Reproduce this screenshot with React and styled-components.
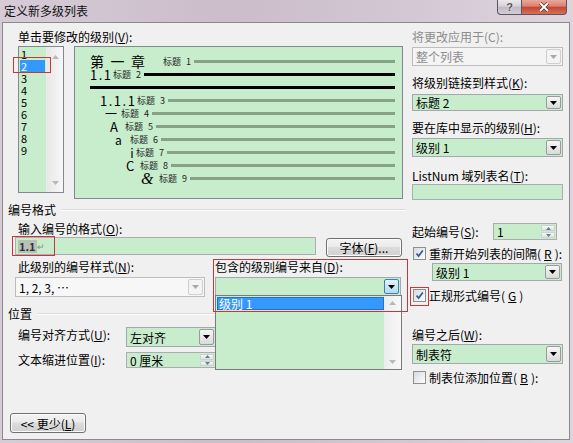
import React from 'react'
import styled, { createGlobalStyle } from 'styled-components'

const GREEN = '#c7edcc'
const RED = '#c8363a'

const px = v => (typeof v === 'number' ? `${v}px` : v || '0')

const GlobalStyle = createGlobalStyle`
  html, body { margin: 0; padding: 0; background: #d4c8d4; }
  body {
    font-family: "Noto Sans CJK SC", "Liberation Sans", sans-serif;
    font-size: 12px;
    color: #000;
  }
  #root { width: 573px; height: 443px; }
  u { text-decoration: underline; text-underline-offset: 1px; }
`

const Window = styled.div`
  width: 573px;
  height: 443px;
  display: flex;
  flex-direction: column;
  background: linear-gradient(90deg, #d6cbd6 0%, #cbbdca 40%, #d3c7d3 70%, #ddd4dd 100%);
  overflow: hidden;
`
const TitleBar = styled.div`
  height: 22px;
  flex: none;
  display: flex;
  justify-content: space-between;
  align-items: flex-start;
  padding: 0 6px 0 4px;
`
const Title = styled.div`
  line-height: 22px;
  color: #111;
`
const Caption = styled.div`
  display: flex;
`
const CaptionButton = styled.div`
  width: ${p => p.$w}px;
  height: 15px;
  box-sizing: border-box;
  display: flex;
  align-items: center;
  justify-content: center;
  border: 1px solid #5e5460;
  border-top: none;
  border-left-width: ${p => (p.$close ? 0 : 1)}px;
  border-radius: ${p => (p.$close ? '0 0 4px 0' : '0 0 0 4px')};
  background: ${p =>
    p.$close
      ? 'linear-gradient(#e9a99c 0%, #d9806f 45%, #c5452f 50%, #d4715a 100%)'
      : 'linear-gradient(#ece8ec 0%, #d7d1d8 45%, #c1bac3 50%, #d2ccd4 100%)'};
  font: bold 11px "Liberation Sans", sans-serif;
  color: #555;
  text-shadow: 0 0 2px #fff;
`
const Client = styled.div`
  flex: 1;
  margin: 0 3px 3px 2px;
  border: 1px solid #8a8a8a;
  background: #f0f0f0;
  display: flex;
  flex-direction: column;
  position: relative;
`

/* ---------- generic controls ---------- */

const Label = styled.div`
  height: 14px;
  line-height: 14px;
  white-space: nowrap;
  color: ${p => (p.$disabled ? '#8d8d8d' : '#000')};
  margin-top: ${p => p.$mt || 0}px;
  padding-left: ${p => p.$pl || 0}px;
  width: ${p => (p.$w ? `${p.$w}px` : 'auto')};
  flex: none;
`
const Combo = styled.div`
  position: relative;
  display: flex;
  box-sizing: border-box;
  flex: none;
  height: ${p => p.$h}px;
  width: ${p => (p.$w ? `${p.$w}px` : 'auto')};
  margin-top: ${p => px(p.$mt)};
  margin-left: ${p => px(p.$ml)};
  border: 1px solid ${p => (p.$disabled ? '#bdbdbd' : '#a4a8ae')};
  background: ${p => p.$bg || GREEN};
`
const ComboText = styled.div`
  flex: 1;
  display: flex;
  align-items: center;
  padding-left: 3px;
  white-space: nowrap;
  color: ${p => (p.$grey ? '#8d8d8d' : '#000')};
`
const ArrowBtn = styled.div`
  width: 15px;
  margin: 1px;
  box-sizing: border-box;
  display: flex;
  align-items: center;
  justify-content: center;
  border: 1px solid ${p => (p.$open ? '#3c7fb1' : p.$disabled ? '#cfcfcf' : '#9a9a9a')};
  border-radius: 2px;
  background: ${p =>
    p.$open
      ? 'linear-gradient(#e3f3fc, #b4daf2)'
      : p.$disabled
      ? '#f4f4f4'
      : 'linear-gradient(#f6f6f6, #dadada)'};
`
const Arrow = ({ color = '#000', up }) => (
  <svg width="7" height="4" viewBox="0 0 7 4">
    <polygon points={up ? '0,4 7,4 3.5,0' : '0,0 7,0 3.5,4'} fill={color} />
  </svg>
)

const ComboBox = ({ text, h, w, mt, ml, bg, disabled, grey, open, children }) => (
  <Combo $h={h} $w={w} $mt={mt} $ml={ml} $bg={bg} $disabled={disabled}>
    <ComboText $grey={grey}>{text}</ComboText>
    <ArrowBtn $disabled={disabled} $open={open}>
      <Arrow color={disabled ? '#a8a8a8' : '#000'} />
    </ArrowBtn>
    {children}
  </Combo>
)

const TextInput = styled.div`
  position: relative;
  box-sizing: border-box;
  flex: none;
  height: ${p => p.$h}px;
  width: ${p => (p.$w ? `${p.$w}px` : 'auto')};
  margin-top: ${p => p.$mt || 0}px;
  border: 1px solid #abadb3;
  background: ${GREEN};
  display: flex;
  align-items: center;
  padding-left: 2px;
`
const Highlight = styled.span`
  background: #b7c1b7;
  color: #333;
  font-weight: bold;
  font-size: 11px;
  line-height: 13px;
  padding: 0 1px;
`
const ReturnMark = styled.span`
  color: #8a8a8a;
  font-size: 9px;
`

const Spinner = styled.div`
  box-sizing: border-box;
  display: flex;
  flex: none;
  width: ${p => p.$w}px;
  height: ${p => p.$h}px;
  margin-left: ${p => px(p.$ml)};
  margin-right: ${p => px(p.$mr)};
  border: 1px solid #abadb3;
  background: ${GREEN};
`
const SpinButtons = styled.div`
  width: 14px;
  display: flex;
  flex-direction: column;
  margin: 1px;
  gap: 1px;
`
const SpinButton = styled.div`
  flex: 1;
  display: flex;
  align-items: center;
  justify-content: center;
  border: 1px solid #cdd0d4;
  border-radius: 1px;
  background: linear-gradient(#f8f8f8, #e2e2e2);
  svg { width: 5px; height: 3px; }
`
const SpinBox = ({ text, w, h, ml, mr }) => (
  <Spinner $w={w} $h={h} $ml={ml} $mr={mr}>
    <ComboText>{text}</ComboText>
    <SpinButtons>
      <SpinButton><Arrow up color="#6b7b8b" /></SpinButton>
      <SpinButton><Arrow color="#6b7b8b" /></SpinButton>
    </SpinButtons>
  </Spinner>
)

const WinButton = styled.div`
  box-sizing: border-box;
  flex: none;
  width: ${p => p.$w}px;
  height: ${p => p.$h}px;
  margin: ${p => p.$m || 0};
  border: 1px solid #707070;
  border-radius: 3px;
  background: linear-gradient(#f3f3f3 0%, #ebebeb 45%, #dcdcdc 50%, #d0d0d0 100%);
  box-shadow: inset 0 0 0 1px #fbfbfb;
  display: flex;
  align-items: center;
  justify-content: center;
  white-space: nowrap;
`

const CheckRow = styled.div`
  display: flex;
  align-items: center;
  gap: 3px;
  height: 14px;
  margin-top: ${p => p.$mt || 0}px;
  padding-left: 3px;
  white-space: nowrap;
`
const Box = styled.div`
  position: relative;
  width: 13px;
  height: 13px;
  box-sizing: border-box;
  border: 1px solid #8e8f8f;
  background: linear-gradient(135deg, #d6dbe0, #fdfdfd);
  display: flex;
  align-items: center;
  justify-content: center;
`
const RedMark = styled.div`
  position: absolute;
  z-index: 5;
  pointer-events: none;
  border: 1px solid ${RED};
  left: ${p => p.$l}px;
  top: ${p => p.$t}px;
  width: ${p => p.$w};
  height: ${p => p.$h}px;
  box-sizing: border-box;
`
const CheckBox = ({ checked, marked }) => (
  <Box>
    {checked && (
      <svg width="9" height="9" viewBox="0 0 9 9">
        <path d="M1.5 4.5 L3.6 7 L7.8 1.5" fill="none" stroke="#3c5a96" strokeWidth="1.8" />
      </svg>
    )}
    {marked && <RedMark $l={-4} $t={-3} $w="19px" $h={19} />}
  </Box>
)

const Section = styled.div`
  display: flex;
  align-items: center;
  gap: 6px;
  height: 14px;
  line-height: 14px;
  margin-top: ${p => p.$mt || 0}px;
  &::after {
    content: '';
    flex: 1;
    border-top: 1px solid #dadada;
    border-bottom: 1px solid #fff;
  }
`

/* ---------- top area ---------- */

const Top = styled.div`
  display: flex;
  padding: 7px 0 0 15px;
`
const Column = styled.div`
  display: flex;
  flex-direction: column;
  flex: none;
  width: ${p => p.$w}px;
  margin-left: ${p => p.$ml || 0}px;
  margin-top: ${p => p.$mt || 0}px;
  padding-left: ${p => p.$pl || 0}px;
`
const Row = styled.div`
  display: flex;
  align-items: ${p => p.$align || 'flex-start'};
  margin-top: ${p => p.$mt || 0}px;
  gap: ${p => p.$gap || 0}px;
`
const LevelList = styled.div`
  position: relative;
  box-sizing: border-box;
  width: 46px;
  height: 147px;
  border: 1px solid #828790;
  display: flex;
`
const LevelItems = styled.div`
  width: 27px;
  background: ${GREEN};
  padding-top: 1px;
`
const LevelItem = styled.div`
  position: relative;
  height: 12px;
  line-height: 12px;
  font-size: 11px;
  width: 24px;
  margin-left: 1px;
  padding-left: 1px;
  background: ${p => (p.$selected ? '#3399ff' : 'transparent')};
  color: ${p => (p.$selected ? '#fff' : '#000')};
`
const ScrollTrack = styled.div`
  flex: 1;
  display: flex;
  flex-direction: column;
  justify-content: space-between;
  align-items: center;
  padding: 8px 0 7px;
  background: linear-gradient(90deg, #e8e8e8, #f7f7f7);
  border-left: 1px solid #ededed;
`

const Preview = styled.div`
  box-sizing: border-box;
  width: 329px;
  height: 153px;
  border: 1px solid #828790;
  background: ${GREEN};
  padding: 8px 7px 0 0;
  display: flex;
  flex-direction: column;
`
const PRow = styled.div`
  height: 13px;
  display: flex;
  align-items: center;
  padding-left: ${p => p.$indent}px;
`
const PNum = styled.span`
  flex: none;
  width: ${p => p.$w}px;
  font-size: ${p => p.$size}px;
  letter-spacing: ${p => p.$ls || 0}px;
  line-height: 13px;
  white-space: nowrap;
  font-family: ${p => (p.$serif ? '"Liberation Serif", serif' : 'inherit')};
  font-style: ${p => (p.$serif ? 'italic' : 'normal')};
`
const PCap = styled.span`
  flex: none;
  width: 28px;
  display: flex;
  justify-content: space-between;
  font-size: 9px;
  line-height: 13px;
  color: #222;
`
const PBar = styled.div`
  flex: 1;
  height: 3px;
  margin-left: ${p => p.$gap}px;
  background: ${p => (p.$black ? '#000' : '#88a288')};
`

const LEVELS = [
  { num: '第一章', w: 73, size: 14, ls: 6.5, indent: 15, cap: 1 },
  { num: '1.1', w: 23, size: 13, ls: 1.5, indent: 15, cap: 2, black: true },
  { indent: 15, black: true },
  { num: '1.1.1', w: 37, size: 13, ls: 1.5, indent: 25, cap: 3 },
  { num: '一', w: 16, size: 12, indent: 30, cap: 4 },
  { num: 'A', w: 15, size: 13, indent: 35, cap: 5 },
  { num: 'a', w: 15, size: 12, indent: 40, cap: 6 },
  { num: 'ⅰ', w: 10, size: 12, indent: 51, cap: 7 },
  { num: 'C', w: 14, size: 13, indent: 51, cap: 8 },
  { num: '&', w: 18, size: 16, indent: 66, cap: 9, serif: true },
]

/* ---------- lower area ---------- */

const Lower = styled.div`
  display: flex;
  margin-top: 3px;
  padding-left: 5px;
`
const Field = styled.div`
  position: relative;
  flex: none;
  width: ${p => p.$w}px;
  margin-left: ${p => p.$ml || 0}px;
  padding: ${p => p.$pad || 0};
  display: flex;
  flex-direction: column;
`
const DropList = styled.div`
  position: absolute;
  z-index: 4;
  top: 100%;
  left: -1px;
  width: 187px;
  height: 75px;
  box-sizing: border-box;
  border: 1px solid #7a7a7a;
  background: ${GREEN};
  display: flex;
`
const DropItems = styled.div`
  flex: 1;
`
const DropItem = styled.div`
  height: 13px;
  line-height: 13px;
  margin: 1px 0 0 1px;
  padding-left: 2px;
  background: #3399ff;
  color: #fff;
  box-shadow: inset 0 0 0 1px #2a6fc0;
`
const DropScroll = styled.div`
  width: 17px;
  display: flex;
  flex-direction: column;
  justify-content: space-between;
  align-items: center;
  padding: 5px 0;
  background: linear-gradient(90deg, #ececec, #f8f8f8);
`

const App = () => {
  return (
    <>
      <GlobalStyle />
      <Window>
        <TitleBar>
          <Title>定义新多级列表</Title>
          <Caption>
            <CaptionButton $w={25}>?</CaptionButton>
            <CaptionButton $w={45} $close>
              <svg width="12" height="10" viewBox="0 0 12 10">
                <path d="M2 1 L10 9 M10 1 L2 9" stroke="#5a2a24" strokeWidth="3.4" />
                <path d="M2 1 L10 9 M10 1 L2 9" stroke="#fff" strokeWidth="2" />
              </svg>
            </CaptionButton>
          </Caption>
        </TitleBar>

        <Client>
          <Top>
            <Column $w={388}>
              <Label>单击要修改的级别(<u>V</u>):</Label>
              <Row $mt={2} $gap={10}>
                <LevelList>
                  <LevelItems>
                    {[1, 2, 3, 4, 5, 6, 7, 8, 9].map(n => (
                      <LevelItem key={n} $selected={n === 2}>
                        {n}
                        {n === 2 && <RedMark $l={-7} $t={-3} $w="38px" $h={16} />}
                      </LevelItem>
                    ))}
                  </LevelItems>
                  <ScrollTrack>
                    <Arrow up color="#b8b8b8" />
                    <Arrow color="#b8b8b8" />
                  </ScrollTrack>
                </LevelList>
                <Preview>
                  {LEVELS.map((l, i) => (
                    <PRow key={i} $indent={l.indent}>
                      {l.num && (
                        <PNum $w={l.w} $size={l.size} $ls={l.ls} $serif={l.serif}>
                          {l.num}
                        </PNum>
                      )}
                      {l.cap && (
                        <PCap>
                          <span>标题</span>
                          <span>{l.cap}</span>
                        </PCap>
                      )}
                      <PBar $black={l.black} $gap={l.cap ? 3 : 0} />
                    </PRow>
                  ))}
                </Preview>
              </Row>
            </Column>

            <Column $w={151} $ml={6}>
              <Label $disabled>将更改应用于(C):</Label>
              <ComboBox text="整个列表" h={19} mt={3} bg="#f4f4f4" disabled grey />
              <Label $mt={10}>将级别链接到样式(<u>K</u>):</Label>
              <ComboBox text="标题 2" h={17} mt={4} />
              <Label $mt={10}>要在库中显示的级别(<u>H</u>):</Label>
              <ComboBox text="级别 1" h={19} mt={3} />
              <Label $mt={12}>ListNum 域列表名(<u>T</u>):</Label>
              <TextInput $h={16} $mt={1} />
            </Column>
          </Top>

          <Lower>
            <Column $w={397}>
              <Section>编号格式</Section>
              <Column $w={390} $pl={7}>
                <Label $mt={5} $pl={3}>输入编号的格式(<u>O</u>):</Label>
                <Row $mt={1}>
                  <TextInput $h={18} $w={301}>
                    <Highlight>1.1</Highlight>
                    <ReturnMark>↵</ReturnMark>
                    <RedMark $l={-4} $t={-2} $w="43px" $h={20} />
                  </TextInput>
                  <WinButton $w={76} $h={19} $m="1px 0 0 10px">字体(<u>F</u>)...</WinButton>
                </Row>
                <Row $mt={2}>
                  <Field $w={190}>
                    <Label $mt={1} $pl={3}>此级别的编号样式(<u>N</u>):</Label>
                    <ComboBox text="1, 2, 3, …" h={20} mt={3} bg="#f7f7f7" disabled />
                  </Field>
                  <Field $w={191} $ml={8} $pad="1px 2px 0">
                    <Label>包含的级别编号来自(<u>D</u>):</Label>
                    <ComboBox text="" h={19} w={186} mt={3} open>
                      <DropList>
                        <DropItems>
                          <DropItem>级别 1</DropItem>
                        </DropItems>
                        <DropScroll>
                          <Arrow up color="#b8b8b8" />
                          <Arrow color="#b8b8b8" />
                        </DropScroll>
                      </DropList>
                    </ComboBox>
                    <RedMark $l={0} $t={0} $w="100%" $h={53} />
                  </Field>
                </Row>
              </Column>

              <Section $mt={10}>位置</Section>
              <Column $w={390} $pl={7}>
                <Row $mt={6}>
                  <Label $w={108} $pl={3} $mt={1}>编号对齐方式(<u>U</u>):</Label>
                  <ComboBox text="左对齐" h={20} w={90} />
                </Row>
                <Row $mt={5}>
                  <Label $w={108} $pl={3} $mt={1}>文本缩进位置(<u>I</u>):</Label>
                  <SpinBox text="0 厘米" w={90} h={16} />
                </Row>
              </Column>
            </Column>

            <Column $w={153} $ml={5}>
              <Row $mt={20} $align="center">
                <Label $pl={2}>起始编号(<u>S</u>):</Label>
                <SpinBox text="1" w={64} h={17} ml="auto" mr={6} />
              </Row>
              <CheckRow $mt={6}>
                <CheckBox checked />
                重新开始列表的间隔(<u>R</u>):
              </CheckRow>
              <ComboBox text="级别 1" h={18} w={130} mt={3} ml={22} />
              <CheckRow $mt={7}>
                <CheckBox checked marked />
                正规形式编号(<u>G</u>)
              </CheckRow>
              <Label $mt={26} $pl={2}>编号之后(<u>W</u>):</Label>
              <ComboBox text="制表符" h={20} w={151} mt={2} ml={2} />
              <CheckRow $mt={6}>
                <CheckBox />
                制表位添加位置(<u>B</u>):
              </CheckRow>
            </Column>
          </Lower>

          <WinButton $w={76} $h={20} $m="auto 0 6px 7px">&lt;&lt; 更少(<u>L</u>)</WinButton>
        </Client>
      </Window>
    </>
  )
}

export default App
